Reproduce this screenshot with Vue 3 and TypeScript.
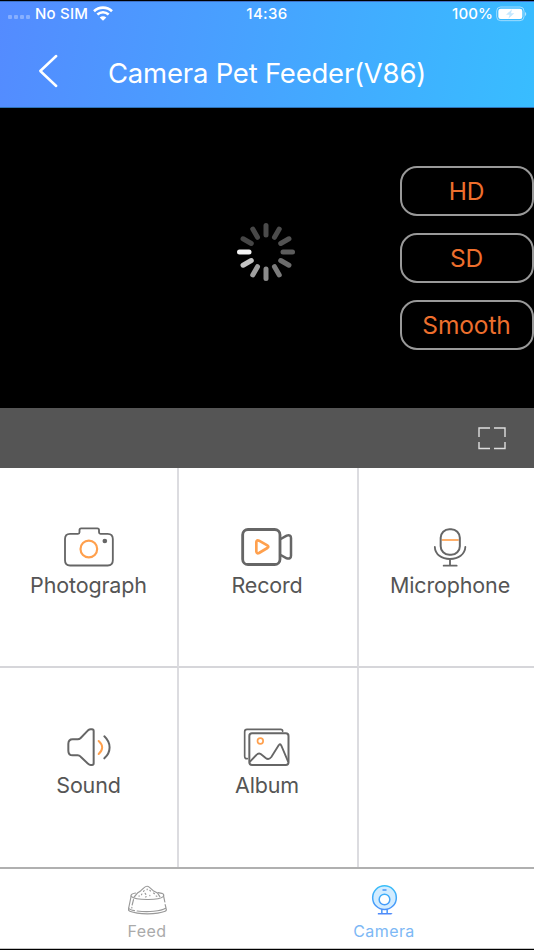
<script setup lang="ts">
interface Quality {
  label: string
  cls: string
}

interface Tool {
  id: string
  label: string
  viewBox: string
}

const qualities: Quality[] = [
  { label: 'HD', cls: 'q-hd' },
  { label: 'SD', cls: 'q-sd' },
  { label: 'Smooth', cls: 'q-smooth' },
]

const tools: Tool[] = [
  { id: 'photo', label: 'Photograph', viewBox: '177 45 180 132' },
  { id: 'record', label: 'Record', viewBox: '177 45 180 132' },
  { id: 'mic', label: 'Microphone', viewBox: '192 45 180 132' },
  { id: 'sound', label: 'Sound', viewBox: '176 45 180 132' },
  { id: 'album', label: 'Album', viewBox: '177 45 180 132' },
  { id: 'empty', label: '', viewBox: '' },
]

// Spoke shades, clockwise from the top.
const spokes: string[] = [
  '#4a4a4a', '#4c4c4c', '#525252', '#5c5c5c', '#6c6c6c', '#7c7c7c',
  '#8c8c8c', '#a0a0a0', '#c4c4c4', '#f4f4f4', '#464646', '#484848',
]
</script>

<template>
  <div class="screen">
    <header class="header">
      <div class="status">
        <div class="status-left">
          <span class="dots"><i v-for="n in 4" :key="n"></i></span>
          <span class="carrier">No SIM</span>
          <svg class="wifi" width="20" height="15" viewBox="0 0 60 45" fill="none" stroke="#fff">
            <path d="M3 15.5C18 1.500 42 1.500 57 15.500" stroke-width="8" />
            <path d="M13 25.500C23 16 37 16 47 25.500" stroke-width="7.500" />
            <path d="M30 44L20 34.500C26 29.500 34 29.500 40 34.500Z" fill="#fff" stroke="none" />
          </svg>
        </div>
        <div class="clock">14:36</div>
        <div class="status-right">
          <span class="percent">100%</span>
          <svg class="battery" width="31" height="16" viewBox="0 0 93 48">
            <rect x="2" y="3" width="82" height="41" rx="12" fill="none" stroke="#fff" stroke-opacity=".5" stroke-width="3" />
            <rect x="7" y="8" width="72" height="31" rx="7" fill="#fff" />
            <path d="M87 18C92 20 92 28 87 30Z" fill="#fff" fill-opacity=".6" />
            <path d="M48 10L30 26H41L37 38L55 22H45Z" fill="#c3e7ff" />
          </svg>
        </div>
      </div>
      <div class="navbar">
        <svg class="back" width="24" height="36" viewBox="0 0 24 36" fill="none" stroke="#fff" stroke-width="2.500" stroke-linecap="round" stroke-linejoin="round">
          <path d="M20.200 3L4.300 18L20.200 33" />
        </svg>
        <h1 class="title">Camera Pet Feeder(V86)</h1>
      </div>
    </header>

    <section class="video">
      <svg class="spinner" width="60" height="60" viewBox="-30 -30 60 60" stroke-width="5" stroke-linecap="round">
        <line v-for="(c, i) in spokes" :key="i" x1="0" y1="-26.500" x2="0" y2="-17" :stroke="c" :transform="`rotate(${i * 30})`" />
      </svg>
      <div class="qualities">
        <button v-for="q in qualities" :key="q.label" class="quality"><span :class="q.cls">{{ q.label }}</span></button>
      </div>
    </section>

    <div class="controls">
      <svg width="30" height="24" viewBox="0 0 30 24" fill="none" stroke="#dedede" stroke-width="1.400">
        <path d="M2 11V2H13M17 2H28V11M28 16V22.500H17M13 22.500H2V16" />
      </svg>
    </div>

    <main class="grid">
      <div v-for="t in tools" :key="t.id" class="cell" :class="`cell-${t.id}`">
        <template v-if="t.label">
          <svg class="icon" width="60" height="44" :viewBox="t.viewBox" fill="none" stroke="#666" stroke-width="6" stroke-linecap="round" stroke-linejoin="round">
            <template v-if="t.id === 'photo'">
              <path d="M210 71.500H234Q238.500 71.500 238.500 67V60Q238.500 55 243.500 55H292Q297 55 297 60V67Q297 71.500 301.500 71.500H323Q338.500 71.500 338.500 87V151Q338.500 166.500 323 166.500H210Q195 166.500 195 151V87Q195 71.500 210 71.500Z" stroke-width="5.500" />
              <circle cx="266.500" cy="117" r="25" stroke="#ffa04d" stroke-width="6.500" />
              <circle cx="314.500" cy="93" r="7" fill="#666" stroke="none" />
            </template>
            <template v-else-if="t.id === 'record'">
              <rect x="194" y="58.500" width="112" height="105" rx="16" stroke-width="8.500" />
              <path d="M308 87L326 77Q339 73 339 84V137Q339 148 326 145L308 135" stroke-width="7.500" />
              <path d="M235 96Q236 89 243 92L268 106Q274 110 268 114L243 129Q236 132 235 125Z" stroke="#ffa04d" stroke-width="8" />
            </template>
            <template v-else-if="t.id === 'mic'">
              <path d="M257 90H308" stroke="#ffa04d" stroke-width="5" stroke-linecap="butt" />
              <rect x="254" y="57.500" width="57.500" height="77" rx="26" />
              <path d="M236.500 111C237 133 257 147 282 147S327 133 328 111M282 148V166M263 167H302" stroke-width="5.500" />
            </template>
            <template v-else-if="t.id === 'sound'">
              <path d="M217 88H232Q237 88 241 84L263 61Q267 58 271 58H275Q280 58 280 63V160Q280 165 275 165H271Q267 165 263 161L241 140Q237 136 232 136H217Q204 136 204 122V102Q204 88 217 88Z" />
              <path d="M295 93Q316 112 295 132" stroke="#ffa04d" stroke-width="6" />
              <path d="M312 79C333 99 333 126 312 145" />
            </template>
            <template v-else>
              <path d="M208 146Q200 147 200 139V65Q200 58 207 58H308Q314 58 314 64" stroke-width="5" />
              <rect x="214" y="70" width="117.500" height="95" rx="8" stroke-width="6" />
              <path d="M216 155L235 135Q243 126 252 135L263 144Q272 151 280 141L302 106Q306 99 310 107L330 154" stroke-width="5.500" />
              <circle cx="247" cy="93" r="8.500" stroke="#ffa04d" stroke-width="5" />
            </template>
          </svg>
          <span class="label">{{ t.label }}</span>
        </template>
      </div>
    </main>

    <nav class="tabs">
      <a class="tab tab-feed">
        <svg width="42" height="34" viewBox="79.500 68 126 102" fill="none" stroke="#999" stroke-width="3.500" stroke-linecap="round" stroke-linejoin="round">
          <path d="M95 107L87 146Q86 151 91 153C115 163 173 163 197 153Q202 151 200 145L197 133M196 125L192 106M87 143Q91 149 105 151M113 152C145 156 184 153 198 144" />
          <path d="M108 98C96 100 93 104 95 108C108 120 178 121 191 109Q196 103 187 99L176 97" />
          <path d="M104 110L115 97Q120 94 124 91L134 82Q142 74 150 81L161 91L174 98L181 109" />
          <path d="M102 118L98 134M97 141V143" />
          <path d="M132 93L134 91M143 86V88M151 90L153 92M126 103L127 101M137 99L139 102M151 106V105M165 100L162 98M118 107H120M138 110L140 109M170 107L172 108" />
        </svg>
        <span>Feed</span>
      </a>
      <a class="tab tab-camera">
        <svg width="42" height="34" viewBox="86.500 68 126 102" fill="none" stroke="url(#cam)" stroke-width="4.500">
          <defs>
            <linearGradient id="cam" gradientUnits="userSpaceOnUse" x1="0" y1="74" x2="0" y2="164">
              <stop offset="0" stop-color="#38c0f8" />
              <stop offset="1" stop-color="#5088fa" />
            </linearGradient>
          </defs>
          <circle cx="151" cy="112" r="35.500" fill="#d2ecff" />
          <circle cx="151" cy="117.500" r="16" fill="#fff" />
          <path d="M145 89H157M143 147V160M159 147V160" stroke="#4795f8" />
          <path d="M131 160.300H172V160.400" />
        </svg>
        <span>Camera</span>
      </a>
    </nav>
  </div>
</template>

<style>
body {
  margin: 0;
  background: #000;
}
</style>

<style scoped>
.screen {
  box-sizing: border-box;
  width: 534px;
  height: 950px;
  padding: 1px 0;
  overflow: hidden;
  display: flex;
  flex-direction: column;
  background: #000;
  font-family: Inter, "Liberation Sans", sans-serif;
}
.header {
  height: 107px;
  flex: none;
  color: #fff;
  background: linear-gradient(100deg, #548bff 0%, #38bdff 100%);
  border-top: 1px solid #3d71c9;
  border-bottom: 1px solid #2e72b5;
  box-sizing: border-box;
}
.status {
  height: 23px;
  display: grid;
  grid-template-columns: 1fr auto 1fr;
  align-items: center;
  font-size: 15px;
  font-weight: 500;
  line-height: 22px;
}
.status-left,
.status-right {
  display: flex;
  align-items: center;
}
.clock {
  letter-spacing: 0.4px;
}
.carrier {
  letter-spacing: 0.2px;
}
.status-left {
  padding-left: 8px;
}
.status-right {
  justify-content: flex-end;
  padding-right: 7px;
}
.dots {
  display: flex;
  gap: 2px;
  padding-top: 7px;
  margin-right: 5px;
}
.dots i {
  width: 4px;
  height: 4px;
  border-radius: 1px;
  background: rgba(255, 255, 255, 0.3);
}
.wifi {
  margin-left: 5px;
}
.percent {
  letter-spacing: 0.1px;
}
.battery {
  margin-left: 3px;
}
.navbar {
  display: flex;
  align-items: center;
  height: 82px;
  padding: 13px 0 0 36px;
  box-sizing: border-box;
}
.back {
  flex: none;
  margin-top: -3px;
}
.title {
  margin: 0 0 0 48px;
  font-size: 27.5px;
  font-weight: 400;
  line-height: 34px;
  letter-spacing: -0.22px;
  white-space: nowrap;
}
.video {
  height: 300px;
  flex: none;
  display: grid;
  grid-template-columns: 236px 1fr 133px;
  box-sizing: border-box;
}
.spinner {
  grid-column: 2;
  margin-top: 114px;
}
.qualities {
  grid-column: 3;
  padding-top: 58px;
  margin-left: -1px;
  display: flex;
  flex-direction: column;
  gap: 17px;
}
.quality {
  height: 50px;
  box-sizing: border-box;
  padding: 0 1px 0 0;
  font: 400 24.5px/44px Inter, "Liberation Sans", sans-serif;
  letter-spacing: -0.1px;
  color: #ee6f2d;
  background: transparent;
  border: 2px solid #999;
  border-radius: 17px;
}
.controls {
  height: 60px;
  flex: none;
  box-sizing: border-box;
  display: flex;
  align-items: center;
  justify-content: flex-end;
  padding-right: 27px;
  background: #555;
}
.grid {
  height: 399px;
  flex: none;
  display: grid;
  grid-template-columns: 179px 180px 182px;
  grid-template-rows: 200px 199px;
  background: #fff;
}
.cell {
  box-sizing: border-box;
  border-right: 2px solid #dcdce0;
  border-bottom: 2px solid #d6d6da;
  padding-top: 57px;
  display: flex;
  flex-direction: column;
  align-items: center;
}
.cell:nth-child(n + 4) {
  border-bottom: 0;
}
.cell:nth-child(3n) {
  border-right: 0;
}
.cell:nth-child(3n + 2) {
  padding-right: 2px;
}
.icon {
  display: block;
  flex: none;
}
.label {
  margin-top: 2px;
  font-size: 21.5px;
  line-height: 28px;
  letter-spacing: -0.15px;
  color: #555;
}
.tabs {
  flex: 1;
  display: grid;
  grid-template-columns: 294px 180px;
  background: #fff;
  border-top: 2px solid #b0b0b0;
  border-bottom: 1px solid #c4c4c4;
}
.tab {
  padding-top: 14px;
  display: flex;
  flex-direction: column;
  align-items: center;
  font-size: 16px;
  line-height: 20px;
  letter-spacing: 0.4px;
  color: #aaa;
}
.tab span {
  margin-top: 4px;
}
.tab-camera {
  color: #7db8f5;
}
</style>
